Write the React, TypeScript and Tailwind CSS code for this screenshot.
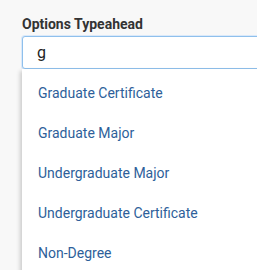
import React from "react";

const items = [
  "Graduate Certificate",
  "Graduate Major",
  "Undergraduate Major",
  "Undergraduate Certificate",
  "Non-Degree",
];

export default function App() {
  return (
    <div className="min-h-[270px] w-[257px] overflow-hidden bg-[#f8f8f8] pl-[22px] pt-[16px] font-['Roboto',sans-serif]">
      <div className="w-[260px]">
        <div className="mb-[3px] text-[14px] font-bold leading-[17px] text-[#333]">Options Typeahead</div>
        <div className="relative">
          <div className="flex h-[33px] items-center rounded-[3px] border border-[#8fc0ec] bg-white pl-[14px] text-[16px] text-[#222] shadow-[0_0_0_1px_rgba(128,189,255,0.25)]">
            g
          </div>
          <div className="flex flex-col bg-white pt-[4px] shadow-[-2px_2px_4px_rgba(0,0,0,0.18)]">
            {items.map((t) => (
              <div key={t} className="flex h-[40px] items-center pl-[16px] text-[14px] text-[#2e5f9a]">
                {t}
              </div>
            ))}
          </div>
        </div>
      </div>
    </div>
  );
}
